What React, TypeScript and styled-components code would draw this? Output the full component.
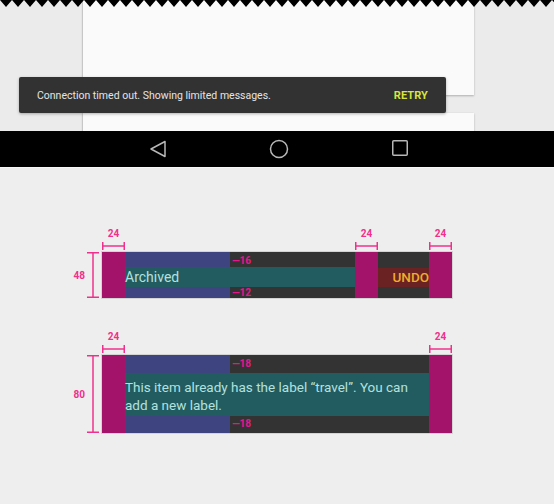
import React from "react";
import styled, { createGlobalStyle } from "styled-components";

const Global = createGlobalStyle`
  html, body { margin: 0; padding: 0; }
  body {
    background: #eeeeee;
    font-family: Roboto, "Noto Sans", "Liberation Sans", sans-serif;
    width: 554px;
    height: 504px;
    overflow: hidden;
  }
`;

const Top = styled.div`
  position: relative;
  height: 131px;
  background: #ebebeb;
  overflow: hidden;
  display: flex;
  flex-direction: column;
  gap: 18px;
  padding-left: 83px;
  box-sizing: border-box;
`;

const Card = styled.div<{ $h: number }>`
  width: 391px;
  height: ${(p) => p.$h}px;
  flex-shrink: 0;
  background: #fafafa;
  box-shadow: 0 1px 2px rgba(0, 0, 0, 0.25), -1px 0 1px rgba(0, 0, 0, 0.08);
`;

const Zigzag = styled.svg`
  position: absolute;
  left: 0;
  top: 0;
`;

const Snackbar = styled.div`
  position: absolute;
  left: 19px;
  top: 77px;
  width: 427px;
  height: 36px;
  box-sizing: border-box;
  padding: 0 18px;
  display: flex;
  align-items: center;
  justify-content: space-between;
  background: #323232;
  border-radius: 2px;
  box-shadow: 0 1px 3px rgba(0, 0, 0, 0.3);
`;

const SnackText = styled.span`
  color: #e4e4e4;
  font-size: 10.5px;
`;

const SnackAction = styled.span`
  color: #d7e63e;
  font-size: 11px;
  font-weight: 700;
  letter-spacing: 0.1px;
`;

const NavBar = styled.div`
  height: 36px;
  background: #000;
  display: flex;
  align-items: center;
  padding-left: 148px;
  gap: 101px;
  border-bottom: 1px solid #f6f6f6;
`;

const NavIcon = styled.svg`
  width: 20px;
  height: 20px;
  flex-shrink: 0;
`;

const Diagrams = styled.div`
  padding: 60px 0 0 70px;
  display: flex;
  flex-direction: column;
  gap: 33px;
`;

const Diagram = styled.div`
  display: grid;
  grid-template-columns: 32px 350px;
  grid-template-rows: 24px auto;
`;

const MarkerRow = styled.div`
  grid-column: 2;
  display: flex;
`;

const Spacer = styled.div<{ $w?: number }>`
  ${(p) => (p.$w ? `width: ${p.$w}px; flex-shrink: 0;` : "flex: 1;")}
`;

const WidthMarker = styled.div`
  width: 23px;
  display: flex;
  flex-direction: column;
  align-items: center;
  flex-shrink: 0;
`;

const MarkLabel = styled.span`
  color: #f0308c;
  font-size: 10px;
  font-weight: 700;
  line-height: 11px;
`;

const HeightMarker = styled.div`
  display: flex;
  align-items: center;
  justify-content: flex-end;
  gap: 2px;
  padding-right: 3px;
`;

const Bar = styled.div<{ $h: number }>`
  display: flex;
  height: ${(p) => p.$h}px;
  box-shadow: 0 0 0 1px #d4d4d4;
`;

const Magenta = styled.div`
  width: 23px;
  flex-shrink: 0;
  background: #a3136a;
`;

const Content = styled.div<{ $pt: number; $pb: number }>`
  flex: 1;
  position: relative;
  box-sizing: border-box;
  padding: ${(p) => p.$pt}px 0 ${(p) => p.$pb}px;
  background: linear-gradient(to right, #3d4480 105px, #333333 105px);
  display: flex;
  flex-direction: column;
`;

const Band = styled.div<{ $lh: number; $fs: number; $pad?: string }>`
  flex: 1;
  background: #225b60;
  color: #b2e2df;
  font-size: ${(p) => p.$fs}px;
  line-height: ${(p) => p.$lh}px;
  padding: ${(p) => p.$pad || "0"};
  box-sizing: border-box;
`;

const Tag = styled.span<{ $top?: number; $bottom?: number }>`
  position: absolute;
  left: 107px;
  ${(p) => (p.$top !== undefined ? `top: ${p.$top}px;` : "")}
  ${(p) => (p.$bottom !== undefined ? `bottom: ${p.$bottom}px;` : "")}
  color: #e8168a;
  font-size: 10px;
  font-weight: 700;
  line-height: 12px;
`;

const Action = styled.div`
  width: 51px;
  flex-shrink: 0;
  background: #333333;
  box-sizing: border-box;
  padding: 16px 0 11px;
  display: flex;
`;

const ActionBand = styled.div`
  flex: 1;
  background: #6b2222;
  color: #efad2c;
  font-size: 13.5px;
  font-weight: 500;
  line-height: 19px;
  white-space: nowrap;
  display: flex;
  justify-content: flex-end;
`;

const PINK = "#f0308c";

const HBracket = () => (
  <svg width="23" height="8" style={{ display: "block", marginTop: 3 }}>
    <line x1="0.75" y1="0" x2="0.75" y2="8" stroke={PINK} strokeWidth="1.5" />
    <line x1="22.25" y1="0" x2="22.25" y2="8" stroke={PINK} strokeWidth="1.5" />
    <line x1="0" y1="4" x2="23" y2="4" stroke={PINK} strokeWidth="1.5" />
  </svg>
);

const VBracket = ({ h }: { h: number }) => (
  <svg width="12" height={h} style={{ display: "block" }}>
    <line x1="0" y1="0.75" x2="12" y2="0.75" stroke={PINK} strokeWidth="1.5" />
    <line x1="0" y1={h - 0.75} x2="12" y2={h - 0.75} stroke={PINK} strokeWidth="1.5" />
    <line x1="6" y1="0" x2="6" y2={h} stroke={PINK} strokeWidth="1.5" />
  </svg>
);

const WM = () => (
  <WidthMarker>
    <MarkLabel>24</MarkLabel>
    <HBracket />
  </WidthMarker>
);

const zigPath = (() => {
  let d = "M0,0";
  for (let i = 0; i < 47; i++) {
    d += ` L${i * 12 + 6},7 L${i * 12 + 12},0`;
  }
  return d + " Z";
})();

export default function App() {
  return (
    <>
      <Global />
      <Top>
        <Card $h={95} />
        <Card $h={40} />
        <Zigzag width="554" height="8" viewBox="0 0 554 8">
          <path d={zigPath} fill="#000" />
        </Zigzag>
        <Snackbar>
          <SnackText>Connection timed out. Showing limited messages.</SnackText>
          <SnackAction>RETRY</SnackAction>
        </Snackbar>
      </Top>
      <NavBar>
        <NavIcon viewBox="0 0 20 20">
          <path d="M17 2.5 L3 10 L17 17.5 Z" fill="none" stroke="#b8b8b8" strokeWidth="1.5" strokeLinejoin="round" />
        </NavIcon>
        <NavIcon viewBox="0 0 20 20">
          <circle cx="10" cy="10" r="8.5" fill="none" stroke="#b8b8b8" strokeWidth="1.5" />
        </NavIcon>
        <NavIcon viewBox="0 0 20 20">
          <rect x="2.75" y="1.75" width="14.5" height="14.5" rx="1" fill="none" stroke="#b8b8b8" strokeWidth="1.5" />
        </NavIcon>
      </NavBar>
      <Diagrams>
        <Diagram>
          <MarkerRow>
            <WM />
            <Spacer />
            <WM />
            <Spacer $w={51} />
            <WM />
          </MarkerRow>
          <HeightMarker>
            <MarkLabel>48</MarkLabel>
            <VBracket h={46} />
          </HeightMarker>
          <Bar $h={46}>
            <Magenta />
            <Content $pt={15} $pb={11}>
              <Band $lh={20} $fs={14}>Archived</Band>
              <Tag $top={3}>—16</Tag>
              <Tag $bottom={-1}>—12</Tag>
            </Content>
            <Magenta />
            <Action>
              <ActionBand>UNDO</ActionBand>
            </Action>
            <Magenta />
          </Bar>
        </Diagram>
        <Diagram>
          <MarkerRow>
            <WM />
            <Spacer />
            <WM />
          </MarkerRow>
          <HeightMarker>
            <MarkLabel>80</MarkLabel>
            <VBracket h={78} />
          </HeightMarker>
          <Bar $h={78}>
            <Magenta />
            <Content $pt={18} $pb={17}>
              <Band $lh={18} $fs={13.5} $pad="5px 0 2px">
                This item already has the label “travel”. You can add a new label.
              </Band>
              <Tag $top={3}>—18</Tag>
              <Tag $bottom={3}>—18</Tag>
            </Content>
            <Magenta />
          </Bar>
        </Diagram>
      </Diagrams>
    </>
  );
}
